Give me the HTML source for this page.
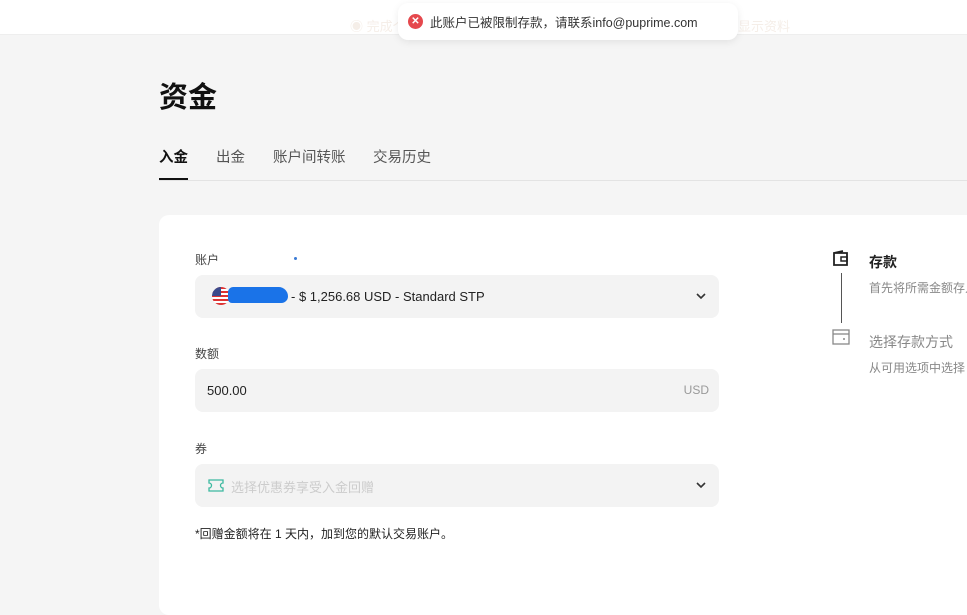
<!DOCTYPE html>
<html><head><meta charset="utf-8"><style>
*{margin:0;padding:0;box-sizing:border-box}
body{width:967px;height:600px;overflow:hidden;background:#f5f5f5;font-family:"Liberation Sans","Noto Sans CJK SC",sans-serif;position:relative;color:#222}
.top{position:absolute;left:0;top:0;width:967px;height:35px;background:#fff;border-bottom:1px solid #eee}
.fade{position:absolute;top:16px;font-size:13px;color:#f5eee8}
.toast{position:absolute;left:398px;top:3px;width:340px;height:37px;background:#fff;border-radius:10px;box-shadow:0 2px 8px rgba(0,0,0,.08);font-size:12.5px;color:#333;display:flex;align-items:center;padding-left:10px}
.toast .x{width:15px;height:15px;border-radius:50%;background:#e5484d;color:#fff;font-size:10px;line-height:15px;text-align:center;margin-right:7px;font-weight:bold}
h1{position:absolute;left:159px;top:74px;font-size:29px;font-weight:bold;color:#111}
.tabs{position:absolute;left:159px;top:146px;font-size:14.5px;color:#555}
.tabs span{position:absolute;white-space:nowrap}
.tabline{position:absolute;left:159px;top:180px;width:808px;height:1px;background:#e3e3e3}
.tabact{position:absolute;left:159px;top:178px;width:29px;height:2px;background:#111}
.card{position:absolute;left:159px;top:215px;width:820px;height:400px;background:#fff;border-radius:10px}
.lbl{position:absolute;left:195px;font-size:12px;color:#444}
.field{position:absolute;left:195px;width:524px;height:43px;background:#f3f3f3;border-radius:8px;font-size:13px}
.chev{position:absolute;right:12px;top:15px}
</style></head><body>
<div class="top"></div>
<div class="fade" style="left:350px">◉ 完成个人资料</div>
<div class="fade" style="left:738px">显示资料</div>
<div class="toast"><div class="x">✕</div>此账户已被限制存款，请联系info@puprime.com</div>
<h1>资金</h1>
<div class="tabs"><span style="left:0;color:#111;font-weight:bold">入金</span><span style="left:57px">出金</span><span style="left:114px">账户间转账</span><span style="left:214px">交易历史</span></div>
<div class="tabline"></div><div class="tabact"></div>
<div class="card"></div>
<div class="lbl" style="top:251px">账户</div>
<div style="position:absolute;left:294px;top:257px;width:3px;height:3px;border-radius:50%;background:#3a7bd5"></div>
<div class="field" style="top:275px">
<div style="position:absolute;left:17px;top:12px;width:18px;height:18px;border-radius:50%;background:repeating-linear-gradient(#d33 0 2px,#fff 2px 4px);overflow:hidden"><div style="width:9px;height:9px;background:#3b4a8c"></div></div>
<div style="position:absolute;left:33px;top:12px;width:60px;height:16px;background:#1a73e8;border-radius:8px 14px 10px 6px"></div>
<div style="position:absolute;left:96px;top:14px;color:#222">- $ 1,256.68 USD - Standard STP</div>
<svg class="chev" width="12" height="12" viewBox="0 0 12 12"><path d="M2 4l4 4 4-4" fill="none" stroke="#333" stroke-width="1.6"/></svg></div>
<div class="lbl" style="top:345px">数额</div>
<div class="field" style="top:369px"><div style="position:absolute;left:12px;top:14px">500.00</div><div style="position:absolute;right:10px;top:14px;color:#999;font-size:12px">USD</div></div>
<div class="lbl" style="top:440px">券</div>
<div class="field" style="top:464px">
<svg style="position:absolute;left:13px;top:15px" width="16" height="13" viewBox="0 0 16 13"><path d="M1 1h14v3a2.5 2.5 0 0 0 0 5v3H1V9a2.5 2.5 0 0 0 0-5z" fill="none" stroke="#3cb9a0" stroke-width="1.3"/></svg>
<div style="position:absolute;left:36px;top:13px;color:#ccc">选择优惠券享受入金回赠</div>
<svg class="chev" width="12" height="12" viewBox="0 0 12 12"><path d="M2 4l4 4 4-4" fill="none" stroke="#333" stroke-width="1.6"/></svg></div>
<div style="position:absolute;left:195px;top:525px;font-size:12px;color:#222">*回赠金额将在 1 天内，加到您的默认交易账户。</div>
<svg style="position:absolute;left:832px;top:250px" width="18" height="17" viewBox="0 0 18 17"><path d="M2 3h13v12H2z M2 3l9-2" fill="none" stroke="#222" stroke-width="1.8"/><rect x="9" y="7" width="6" height="4" fill="none" stroke="#222" stroke-width="1.5"/></svg>
<div style="position:absolute;left:841px;top:273px;width:1px;height:50px;background:#555"></div>
<svg style="position:absolute;left:832px;top:329px" width="18" height="16" viewBox="0 0 18 16"><rect x="1" y="1" width="16" height="14" fill="none" stroke="#888" stroke-width="1.3"/><path d="M1 5h16" stroke="#888" stroke-width="1.3"/><circle cx="12" cy="10" r="1" fill="#888"/></svg>
<div style="position:absolute;left:869px;top:252px;font-size:14px;font-weight:bold;color:#222;white-space:nowrap">存款</div>
<div style="position:absolute;left:869px;top:279px;font-size:12px;color:#888;white-space:nowrap">首先将所需金额存入</div>
<div style="position:absolute;left:869px;top:332px;font-size:14px;color:#888;white-space:nowrap">选择存款方式</div>
<div style="position:absolute;left:869px;top:359px;font-size:12px;color:#888;white-space:nowrap">从可用选项中选择</div>
</body></html>
